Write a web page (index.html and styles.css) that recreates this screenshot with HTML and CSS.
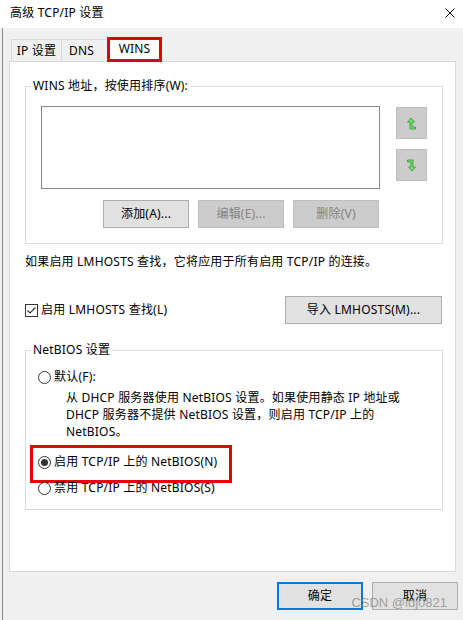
FILE: index.html
```html
<!DOCTYPE html>
<html lang="zh-CN">
<head>
    <meta charset="UTF-8">
    <meta name="viewport" content="width=device-width, initial-scale=1.0">
    <title>高级 TCP/IP 设置</title>
    <link rel="stylesheet" href="styles.css">
</head>
<body>
    <div class="titlebar">
        <span class="title">高级 TCP/IP 设置</span>
        <svg class="close" width="10" height="10" viewBox="0 0 10 10">
            <path d="M0.5 0.5 L9.5 9.5 M9.5 0.5 L0.5 9.5" stroke="#000" stroke-width="1" fill="none"/>
        </svg>
    </div>

    <div class="frame">
        <div class="tabs">
            <div class="tab tab-ip">IP 设置</div>
            <div class="tab tab-dns">DNS</div>
            <div class="tab active">WINS</div>
        </div>

        <div class="panel">
            <fieldset class="group">
                <legend>WINS 地址，按使用排序(W):</legend>
                <div class="group-body wins-body">
                    <div class="list-row">
                        <div class="listbox"></div>
                        <div class="order">
                            <button class="arrow-btn">
                                <svg width="11" height="13" viewBox="0 0 11 13">
                                    <path d="M4 12 L4 5 L1.5 5 L5 1 L8.5 5 L6 5 L6 10 L9.5 10 L9.5 12 Z" fill="#7ddc7d" stroke="#3aa83a" stroke-width="1" stroke-linejoin="miter"/>
                                </svg>
                            </button>
                            <button class="arrow-btn">
                                <svg width="11" height="13" viewBox="0 0 11 13">
                                    <path d="M1.5 1 L7 1 L7 8 L9.5 8 L6 12 L2.5 8 L5 8 L5 3 L1.5 3 Z" fill="#7ddc7d" stroke="#3aa83a" stroke-width="1" stroke-linejoin="miter"/>
                                </svg>
                            </button>
                        </div>
                    </div>
                    <div class="btn-row">
                        <button class="btn">添加(A)...</button>
                        <button class="btn disabled">编辑(E)...</button>
                        <button class="btn disabled">删除(V)</button>
                    </div>
                </div>
            </fieldset>

            <p class="note">如果启用 LMHOSTS 查找，它将应用于所有启用 TCP/IP 的连接。</p>

            <div class="lm-row">
                <label class="check">
                    <span class="box">
                        <svg width="11" height="11" viewBox="0 0 11 11">
                            <path d="M1.5 5.5 L4 8 L9.5 2.5" stroke="#333" stroke-width="1.2" fill="none"/>
                        </svg>
                    </span>
                    启用 LMHOSTS 查找(L)
                </label>
                <button class="btn import">导入 LMHOSTS(M)...</button>
            </div>

            <fieldset class="group netbios">
                <legend>NetBIOS 设置</legend>
                <div class="group-body netbios-body">
                    <div class="radio"><span class="dot"></span>默认(F):</div>
                    <p class="desc">从 DHCP 服务器使用 NetBIOS 设置。如果使用静态 IP 地址或<br>DHCP 服务器不提供 NetBIOS 设置，则启用 TCP/IP 上的<br>NetBIOS。</p>
                    <div class="highlight">
                        <div class="radio"><span class="dot checked"></span>启用 TCP/IP 上的 NetBIOS(N)</div>
                    </div>
                    <div class="radio last"><span class="dot"></span>禁用 TCP/IP 上的 NetBIOS(S)</div>
                </div>
            </fieldset>
        </div>

        <div class="footer">
            <button class="btn default">确定</button>
            <button class="btn">取消</button>
            <span class="watermark">CSDN @ldj0821</span>
        </div>
    </div>
</body>
</html>
```

FILE: styles.css
```css
body {
    margin: 0;
    width: 463px;
    height: 620px;
    overflow: hidden;
    background-color: #f0f0f0;
    font-family: "Noto Sans", "Noto Sans CJK SC", sans-serif;
    font-size: 12px;
    line-height: 16px;
    letter-spacing: 0.2px;
    color: #000;
}
.titlebar {
    height: 28px;
    background-color: #fff;
    display: flex;
    align-items: center;
    justify-content: space-between;
    padding: 0 8px 2px 10px;
    box-sizing: border-box;
}
.frame {
    margin-left: 2px;
    border-left: 1px solid #8a8a8a;
    padding: 9px 7px 0 6px;
    height: 592px;
    box-sizing: border-box;
}
.tabs {
    display: flex;
    align-items: flex-end;
    height: 24px;
    padding-left: 2px;
}
.tab {
    height: 22px;
    box-sizing: border-box;
    border: 1px solid #d9d9d9;
    border-bottom: none;
    display: flex;
    align-items: center;
    justify-content: center;
    background-color: #f0f0f0;
}
.tab-ip {
    width: 51px;
}
.tab-dns {
    width: 47px;
    margin-left: -1px;
    padding-right: 6px;
}
.tab.active {
    position: relative;
    width: 55px;
    height: 25px;
    margin-left: -1px;
    margin-bottom: -1px;
    border: 3px solid #e60000;
    background-color: #fff;
    padding-bottom: 2px;
}
.panel {
    height: 511px;
    box-sizing: border-box;
    background-color: #fff;
    border: 1px solid #d9d9d9;
    padding: 0 12px 0 15px;
}
.group {
    margin: 16px 0 0;
    padding: 0;
    border: 1px solid #dcdcdc;
    min-width: 0;
}
.group legend {
    margin-left: 5px;
    padding: 0 2px;
    line-height: 16px;
}
.wins-body {
    padding: 12px 15px 15px;
}
.list-row {
    display: flex;
    gap: 16px;
}
.listbox {
    width: 339px;
    height: 83px;
    box-sizing: border-box;
    border: 1px solid #828790;
    background-color: #fff;
}
.order {
    display: flex;
    flex-direction: column;
    gap: 10px;
    padding-top: 1px;
}
.arrow-btn {
    width: 31px;
    height: 32px;
    padding: 0;
    border: 1px solid #bfbfbf;
    background-color: #cccccc;
    display: flex;
    align-items: center;
    justify-content: center;
}
.btn {
    font: inherit;
    letter-spacing: inherit;
    color: #000;
    height: 28px;
    width: 86px;
    padding: 0;
    border: 1px solid #adadad;
    background-color: #e1e1e1;
}
.btn.disabled {
    color: #838383;
    border-color: #bfbfbf;
    background-color: #cccccc;
}
.btn-row {
    display: flex;
    gap: 9px;
    margin-top: 11px;
    padding-left: 62px;
}
.note {
    margin: 10px 0 0;
}
.lm-row {
    display: flex;
    justify-content: space-between;
    align-items: center;
    margin-top: 26px;
}
.check {
    display: flex;
    align-items: center;
    gap: 3px;
}
.box {
    width: 13px;
    height: 13px;
    box-sizing: border-box;
    border: 1px solid #333;
    background-color: #fff;
    display: flex;
    align-items: center;
    justify-content: center;
}
.btn.import {
    width: 157px;
    margin-right: 1px;
}
.netbios {
    margin-top: 18px;
}
.netbios-body {
    padding: 11px 12px 13px;
}
.radio {
    display: flex;
    align-items: center;
    gap: 3px;
    height: 16px;
}
.dot {
    width: 13px;
    height: 13px;
    box-sizing: border-box;
    border: 1px solid #333;
    border-radius: 50%;
    background-color: #fff;
    display: flex;
    align-items: center;
    justify-content: center;
}
.dot.checked::after {
    content: "";
    width: 7px;
    height: 7px;
    border-radius: 50%;
    background-color: #333;
}
.desc {
    margin: 4px 0 0 28px;
    line-height: 17px;
    white-space: nowrap;
}
.highlight {
    width: 202px;
    height: 38px;
    box-sizing: border-box;
    margin: 5px 0 0 -8px;
    padding: 0 0 4px 5px;
    border: 3px solid #e60000;
    display: flex;
    align-items: center;
}
.radio.last {
    margin-top: -3px;
}
.footer {
    position: relative;
    display: flex;
    justify-content: flex-end;
    gap: 9px;
    margin: 10px -2px 0 0;
}
.btn.default {
    border: 2px solid #0078d7;
}
.watermark {
    position: absolute;
    right: 11px;
    top: 13px;
    font-family: "Liberation Sans", sans-serif;
    font-size: 13px;
    letter-spacing: 0;
    color: rgba(140, 140, 140, 0.8);
    pointer-events: none;
}
```
